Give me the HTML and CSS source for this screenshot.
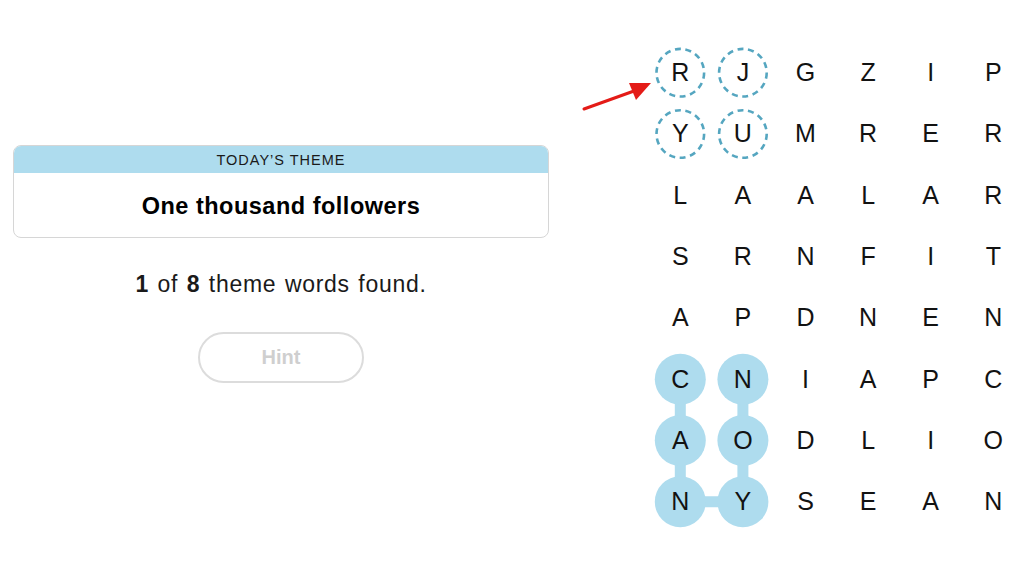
FILE: index.html
```html
<!DOCTYPE html>
<html lang="en">
<head>
    <meta charset="UTF-8">
    <meta name="viewport" content="width=device-width, initial-scale=1.0">
    <title>Strands</title>
    <link rel="stylesheet" href="styles.css">
</head>
<body>
    <div class="page">
        <div class="info">
            <div class="theme-card">
                <div class="theme-label">TODAY’S THEME</div>
                <div class="theme-title">One thousand followers</div>
            </div>
            <p class="progress"><b>1</b> of <b>8</b> theme words found.</p>
            <button class="hint" disabled>Hint</button>
        </div>

        <div class="board">
            <svg class="marks" width="376" height="491" viewBox="0 0 376 491">
                <polyline points="31.3,337.2 31.3,459.8 93.9,459.8 93.9,337.2" fill="none" stroke="#aedcee" stroke-width="11"/>
                <g fill="#aedcee">
                    <circle cx="31.3" cy="337.2" r="25.5"/>
                    <circle cx="31.3" cy="398.5" r="25.5"/>
                    <circle cx="31.3" cy="459.8" r="25.5"/>
                    <circle cx="93.9" cy="337.2" r="25.5"/>
                    <circle cx="93.9" cy="398.5" r="25.5"/>
                    <circle cx="93.9" cy="459.8" r="25.5"/>
                </g>
                <g fill="none" stroke="#55a6c0" stroke-width="2.6" stroke-dasharray="6 4.6">
                    <circle cx="31.3" cy="30.7" r="23.8"/>
                    <circle cx="93.9" cy="30.7" r="23.8"/>
                    <circle cx="31.3" cy="92" r="23.8"/>
                    <circle cx="93.9" cy="92" r="23.8"/>
                </g>
            </svg>
            <div class="grid">
                <span>R</span><span>J</span><span>G</span><span>Z</span><span>I</span><span>P</span>
                <span>Y</span><span>U</span><span>M</span><span>R</span><span>E</span><span>R</span>
                <span>L</span><span>A</span><span>A</span><span>L</span><span>A</span><span>R</span>
                <span>S</span><span>R</span><span>N</span><span>F</span><span>I</span><span>T</span>
                <span>A</span><span>P</span><span>D</span><span>N</span><span>E</span><span>N</span>
                <span>C</span><span>N</span><span>I</span><span>A</span><span>P</span><span>C</span>
                <span>A</span><span>O</span><span>D</span><span>L</span><span>I</span><span>O</span>
                <span>N</span><span>Y</span><span>S</span><span>E</span><span>A</span><span>N</span>
            </div>
            <svg class="arrow" width="80" height="40" viewBox="0 0 80 40">
                <line x1="2" y1="30" x2="52" y2="12" stroke="#e41b17" stroke-width="3" stroke-linecap="round"/>
                <polygon points="69,4 47,4 54,21" fill="#e41b17"/>
            </svg>
        </div>
    </div>
</body>
</html>
```

FILE: styles.css
```css
body {
    margin: 0;
    background: #fff;
    font-family: 'Liberation Sans', Arial, sans-serif;
    color: #121212;
}
.page {
    display: flex;
    height: 583px;
}
.info {
    width: 536px;
    margin-left: 13px;
    padding-top: 145px;
    display: flex;
    flex-direction: column;
    align-items: center;
}
.theme-card {
    width: 534px;
    border: 1px solid #d6d6d6;
    border-radius: 8px;
    overflow: hidden;
}
.theme-label {
    background: #aedcee;
    height: 27px;
    line-height: 28px;
    text-align: center;
    font-size: 14.5px;
    letter-spacing: 1px;
    color: #1a1a1a;
}
.theme-title {
    height: 64px;
    line-height: 66px;
    text-align: center;
    font-size: 23.5px;
    font-weight: bold;
    letter-spacing: 0.5px;
    color: #000;
}
.progress {
    margin: 33px 0 0;
    font-size: 23px;
    letter-spacing: 0.7px;
    word-spacing: 1.5px;
    color: #1a1a1a;
}
.hint {
    margin-top: 34px;
    width: 166px;
    height: 51px;
    border: 2px solid #dcdcdc;
    border-radius: 26px;
    background: #fff;
    font-family: 'Liberation Sans', Arial, sans-serif;
    font-size: 20px;
    font-weight: bold;
    color: #cfcfcf;
}
.board {
    position: relative;
    margin-left: 100px;
    margin-top: 42px;
    width: 376px;
    height: 491px;
}
.marks {
    position: absolute;
    left: 0;
    top: 0;
}
.grid {
    position: relative;
    display: grid;
    grid-template-columns: repeat(6, 62.6px);
    grid-auto-rows: 61.3px;
}
.grid span {
    display: flex;
    align-items: center;
    justify-content: center;
    font-size: 25px;
    color: #121212;
}
.arrow {
    position: absolute;
    left: -67px;
    top: 37px;
}
```
